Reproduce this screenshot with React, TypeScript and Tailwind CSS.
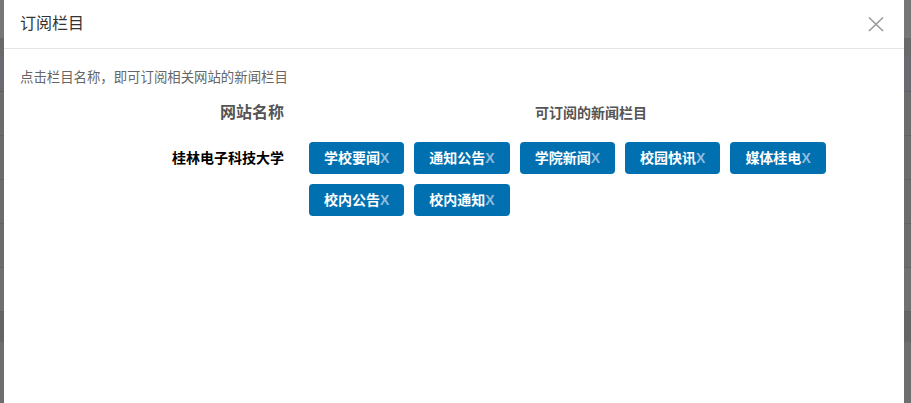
import React from 'react';

const sites = [
  {
    name: '桂林电子科技大学',
    columns: ['学校要闻', '通知公告', '学院新闻', '校园快讯', '媒体桂电', '校内公告', '校内通知'],
  },
];

const font = { fontFamily: '"Liberation Sans", "Noto Sans CJK SC", sans-serif' };

const ColumnTag: React.FC<{ label: string }> = ({ label }) => (
  <button className="flex h-[32px] items-center rounded-[4px] bg-[#0070b0] px-[15px] text-[14px] font-bold text-white">
    <span>{label}</span>
    <span className="text-[#8fbcdc]">X</span>
  </button>
);

const BackdropStrip: React.FC<{ width: string }> = ({ width }) => (
  <div className={`flex ${width} shrink-0 flex-col bg-[#6c6c6c]`}>
    <div className="h-[38px] bg-[#767676]" />
    <div className="h-[18px] bg-[#696969]" />
    <div className="h-[36px] border-b border-[#5f5f5f] bg-[#6a6a70]" />
    <div className="h-[44px] border-b border-[#626262]" />
    <div className="h-[44px] border-b border-[#626262]" />
    <div className="h-[44px] border-b border-[#626262]" />
    <div className="h-[44px] border-b border-[#626262]" />
    <div className="h-[44px] border-b border-[#626262] bg-[#707070]" />
    <div className="h-[30px] bg-[#656565]" />
    <div className="flex-1 bg-[#6e6e6e]" />
  </div>
);

export default function App() {
  return (
    <div className="flex h-[403px] w-full overflow-hidden bg-[#6c6c6c]" style={font}>
      <BackdropStrip width="w-[4px]" />
      <div className="flex flex-1 flex-col bg-white">
        <div className="flex h-[49px] shrink-0 items-center justify-between border-b border-[#e5e5e5] pl-4 pr-[20px]">
          <h4 className="text-[16px] leading-[20px] text-[#333]">订阅栏目</h4>
          <button className="flex h-[16px] w-[16px] items-center justify-center">
            <svg width="16" height="16" viewBox="0 0 16 16" fill="none" stroke="#999" strokeWidth="1.6">
              <path d="M1 1.5 15 15M15 1.5 1 15" />
            </svg>
          </button>
        </div>
        <div className="flex flex-col px-4 pt-[19px]">
          <p className="text-[13.4px] leading-[20px] text-[#666]">点击栏目名称，即可订阅相关网站的新闻栏目</p>
          <div className="mt-[15px] flex h-[20px] items-center">
            <div className="w-[274px] pr-[10px] text-right text-[16px] font-bold text-[#555]">网站名称</div>
            <div className="flex-1 text-center text-[14px] font-bold text-[#555]">可订阅的新闻栏目</div>
          </div>
          {sites.map((site) => (
            <div key={site.name} className="mt-[19px] flex items-start">
              <div className="w-[274px] pr-[10px] text-right text-[14px] font-bold leading-[32px] text-black">
                {site.name}
              </div>
              <div className="flex flex-1 flex-wrap gap-[10px] pl-[15px]">
                {site.columns.map((c) => (
                  <ColumnTag key={c} label={c} />
                ))}
              </div>
            </div>
          ))}
        </div>
      </div>
      <BackdropStrip width="w-[7px]" />
    </div>
  );
}
